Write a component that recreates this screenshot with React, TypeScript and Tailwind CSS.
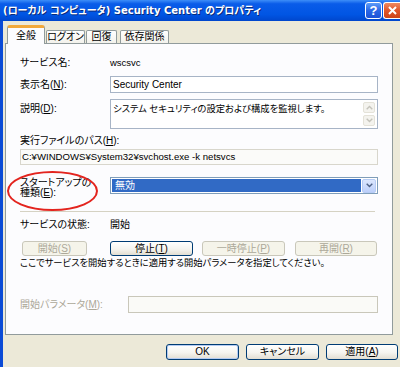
import React from "react";

const U = ({ c }: { c: string }) => <span className="underline">{c}</span>;

function XPButton({
  children,
  disabled,
  def,
  className = "",
}: {
  children: React.ReactNode;
  disabled?: boolean;
  def?: boolean;
  className?: string;
}) {
  return (
    <div
      className={`flex items-center justify-center rounded-[3px] border text-[10px] leading-none ${
        disabled
          ? "border-[#C9C7BA] bg-[#F5F4EA] text-[#ACA899]"
          : "border-[#003C74] bg-[linear-gradient(to_bottom,#ffffff,#f5f4ef_55%,#e2ded2)] text-black"
      } ${def ? "shadow-[inset_0_0_0_1px_#B4CBF2]" : ""} ${className}`}
    >
      {children}
    </div>
  );
}

function Chevron({ dir = "down", color = "#4D6185" }: { dir?: "up" | "down"; color?: string }) {
  return (
    <svg width="7" height="5" viewBox="0 0 7 5">
      <path
        d={dir === "down" ? "M0.7 0.8 L3.5 3.6 L6.3 0.8" : "M0.7 4.2 L3.5 1.4 L6.3 4.2"}
        fill="none"
        stroke={color}
        strokeWidth="1.4"
      />
    </svg>
  );
}

export default function App() {
  return (
    <div className="w-[400px] h-[367px] overflow-hidden bg-[#ECE9D8] font-['Liberation_Sans','Noto_Sans_CJK_JP',sans-serif] [font-feature-settings:'palt'] text-black">
      {/* Title bar */}
      <div className="flex h-[21px] items-center justify-between bg-[linear-gradient(to_bottom,#3d8ef8,#0a5ce9_18%,#0055e3_70%,#0046cc)]">
        <div className="pl-[3px] font-['DejaVu_Sans','Noto_Sans_CJK_JP',sans-serif] text-[10px] font-bold leading-none text-white [text-shadow:1px_1px_0_#0a2a7a] whitespace-nowrap">
          (ローカル コンピュータ) Security Center のプロパティ
        </div>
        <div className="flex items-center gap-[1px]">
          <div className="flex h-[17px] w-[17px] items-center justify-center rounded-[3px] border border-white bg-[linear-gradient(to_bottom,#5d9cf8,#2a67e6_50%,#1d52d6)] font-['Liberation_Sans',sans-serif] text-[13px] font-bold leading-none text-white">
            ?
          </div>
          <div className="flex h-[17px] w-[17px] items-center justify-center rounded-l-[3px] border border-r-0 border-white bg-[linear-gradient(to_bottom,#ee8a62,#e0552a_50%,#cc4419)]">
            <svg width="9" height="9" viewBox="0 0 9 9">
              <path d="M1 1 L8 8 M8 1 L1 8" stroke="white" strokeWidth="2" />
            </svg>
          </div>
        </div>
      </div>

      {/* Body */}
      <div className="h-[346px] border-l-[3px] border-[#0B4BD6] pt-[4px]">
        {/* Tabs */}
        <div className="flex h-[18px] items-end pl-[4px] text-[10px] leading-none">
          <div className="relative z-10 -mb-px flex h-[19px] w-[38px] items-center justify-center rounded-t-[3px] border border-b-0 border-[#919B9C] border-t-[3px] border-t-[#F2A93B] bg-[#FCFCFE] pb-[1px]">
            全般
          </div>
          <div className="ml-[1px] flex h-[13px] w-[39px] items-center justify-center rounded-t-[2px] border border-b-0 border-[#919B9C] bg-[linear-gradient(to_bottom,#ffffff,#f3f2ec)]">
            ログオン
          </div>
          <div className="ml-[1px] flex h-[13px] w-[31px] items-center justify-center rounded-t-[2px] border border-b-0 border-[#919B9C] bg-[linear-gradient(to_bottom,#ffffff,#f3f2ec)]">
            回復
          </div>
          <div className="ml-[3px] flex h-[13px] w-[49px] items-center justify-center rounded-t-[2px] border border-b-0 border-[#919B9C] bg-[linear-gradient(to_bottom,#ffffff,#f3f2ec)]">
            依存関係
          </div>
        </div>

        {/* Panel */}
        <div className="relative ml-[2px] h-[292px] w-[388px] border border-[#919B9C] bg-[#FCFCFE] px-[14px] text-[10px] leading-[12px]">
          {/* annotation ellipse */}
          <div className="absolute left-[1px] top-[127px] h-[40px] w-[91px] rounded-[50%] border-2 border-[#E3241E]" />

          <div className="mt-[12px] flex h-[14px] items-center">
            <div className="w-[90px]">サービス名:</div>
            <div className="text-[9.5px]">wscsvc</div>
          </div>

          <div className="mt-[6px] flex h-[17px] items-center">
            <div className="w-[90px]">
              表示名(<U c="N" />):
            </div>
            <div className="flex h-[17px] flex-1 items-center border border-[#A7B4C6] bg-white pl-[2px]">
              Security Center
            </div>
          </div>

          <div className="mt-[6px] flex h-[30px]">
            <div className="w-[90px] pt-[4px]">
              説明(<U c="D" />):
            </div>
            <div className="flex h-[30px] flex-1 border border-[#A7B4C6] bg-white">
              <div className="flex-1 pl-[2px] pt-[3px] text-[9.3px] whitespace-nowrap">
                システム セキュリティの設定および構成を監視します。
              </div>
              <div className="flex w-[14px] flex-col justify-between py-[2px] pr-[1px]">
                <div className="flex h-[11px] w-[12px] items-center justify-center rounded-[2px] border border-[#E4E2D8] bg-[#F4F3EE]">
                  <Chevron dir="up" color="#C4C3BA" />
                </div>
                <div className="flex h-[11px] w-[12px] items-center justify-center rounded-[2px] border border-[#E4E2D8] bg-[#F4F3EE]">
                  <Chevron dir="down" color="#C4C3BA" />
                </div>
              </div>
            </div>
          </div>

          <div className="mt-[6px] flex h-[12px] items-center">
            実行ファイルのパス(<U c="H" />):
          </div>

          <div className="mt-[2px] flex h-[16px] items-center border border-[#D8D6CC] bg-[#FBFBF9] pl-[1px] text-[9.6px] whitespace-nowrap">
            C:¥WINDOWS¥System32¥svchost.exe -k netsvcs
          </div>

          <div className="mt-[12px] flex h-[21px]">
            <div className="w-[90px] pt-[1px] leading-[10px]">
              <div>スタートアップの</div>
              <div>
                種類(<U c="E" />):
              </div>
            </div>
            <div className="flex h-[17px] flex-1 items-center border border-[#7F9DB9] bg-white p-[1px]">
              <div className="flex h-[13px] flex-1 items-center bg-[#316AC5] pl-[3px] text-white">
                無効
              </div>
              <div className="ml-[1px] flex h-[14px] w-[14px] items-center justify-center rounded-[2px] border border-[#B7CCF5] bg-[linear-gradient(to_bottom,#dbe6fd,#bccffa)]">
                <Chevron />
              </div>
            </div>
          </div>

          <div className="mt-[13px] h-[1px] w-[355px] bg-[#D5D2C3]" />

          <div className="mt-[7px] flex h-[12px] items-center">
            <div className="w-[90px]">サービスの状態:</div>
            <div>開始</div>
          </div>

          <div className="mt-[10px] flex h-[15px] pl-[2px]">
            <XPButton disabled className="h-[15px] w-[65px]">
              開始(<U c="S" />)
            </XPButton>
            <XPButton className="ml-[23px] h-[15px] w-[83px]">
              停止(<U c="T" />)
            </XPButton>
            <XPButton disabled className="ml-[9px] h-[15px] w-[83px]">
              一時停止(<U c="P" />)
            </XPButton>
            <XPButton disabled className="ml-[10px] h-[15px] w-[82px]">
              再開(<U c="R" />)
            </XPButton>
          </div>

          <div className="mt-[1px] flex h-[12px] items-center text-[9.3px] whitespace-nowrap">
            ここでサービスを開始するときに適用する開始パラメータを指定してください。
          </div>

          <div className="mt-[27px] flex h-[17px] items-center">
            <div className="w-[108px] text-[#ACA899]">
              開始パラメータ(<U c="M" />):
            </div>
            <div className="h-[17px] flex-1 border border-[#C9C7BA] bg-[#FAFAF7]" />
          </div>
        </div>

        {/* Bottom buttons */}
        <div className="mt-[9px] flex justify-end gap-[7px] pr-[2px]">
          <XPButton def className="h-[16px] w-[73px]">
            OK
          </XPButton>
          <XPButton className="h-[16px] w-[73px]">キャンセル</XPButton>
          <XPButton className="h-[16px] w-[72px]">
            適用(<U c="A" />)
          </XPButton>
        </div>
      </div>
    </div>
  );
}
